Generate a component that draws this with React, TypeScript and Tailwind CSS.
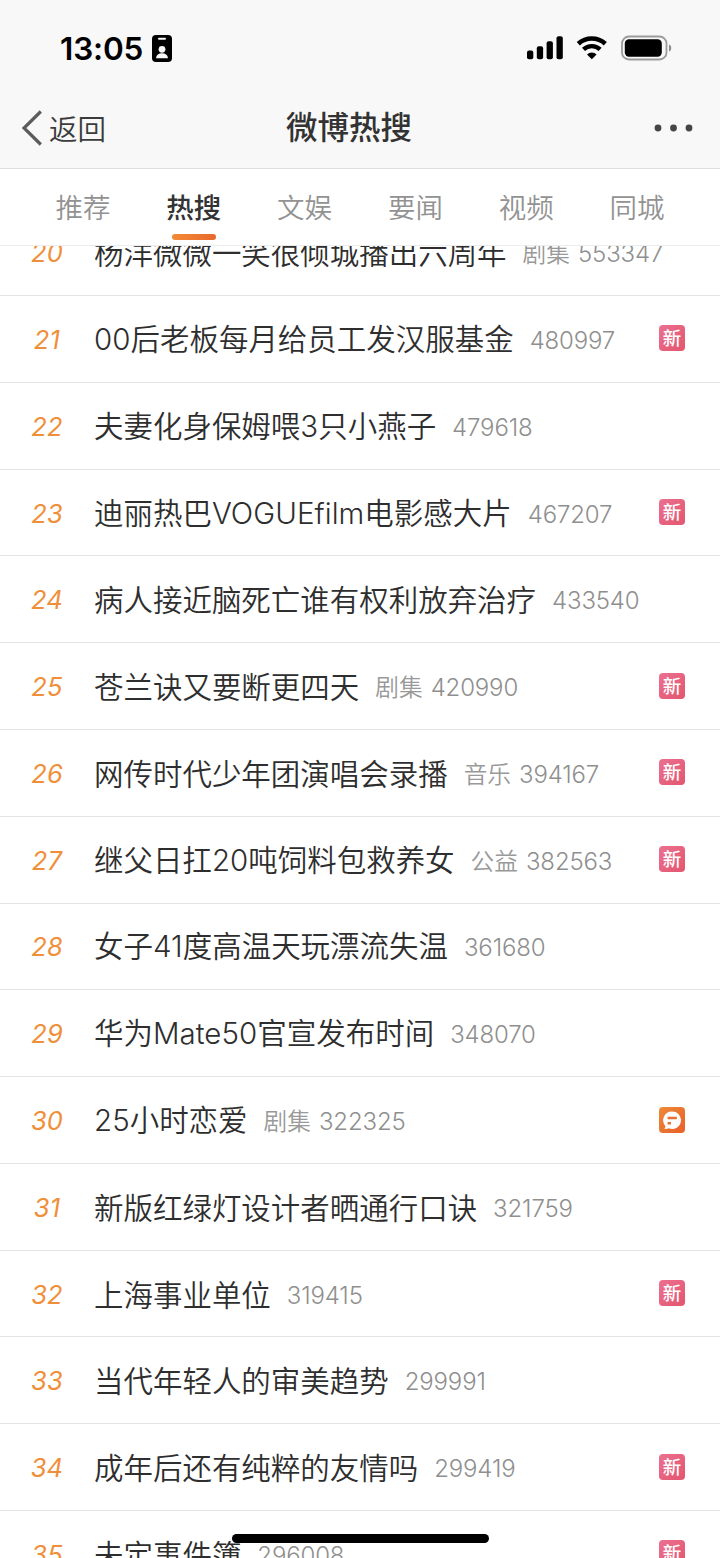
import React from "react";

type Badge = "new" | "discuss";

interface Topic {
  rank: number;
  title: string;
  category?: string;
  heat: string;
  badge?: Badge;
}

const topics: Topic[] = [
  { rank: 20, title: "杨洋微微一笑很倾城播出六周年", category: "剧集", heat: "553347" },
  { rank: 21, title: "00后老板每月给员工发汉服基金", heat: "480997", badge: "new" },
  { rank: 22, title: "夫妻化身保姆喂3只小燕子", heat: "479618" },
  { rank: 23, title: "迪丽热巴VOGUEfilm电影感大片", heat: "467207", badge: "new" },
  { rank: 24, title: "病人接近脑死亡谁有权利放弃治疗", heat: "433540" },
  { rank: 25, title: "苍兰诀又要断更四天", category: "剧集", heat: "420990", badge: "new" },
  { rank: 26, title: "网传时代少年团演唱会录播", category: "音乐", heat: "394167", badge: "new" },
  { rank: 27, title: "继父日扛20吨饲料包救养女", category: "公益", heat: "382563", badge: "new" },
  { rank: 28, title: "女子41度高温天玩漂流失温", heat: "361680" },
  { rank: 29, title: "华为Mate50官宣发布时间", heat: "348070" },
  { rank: 30, title: "25小时恋爱", category: "剧集", heat: "322325", badge: "discuss" },
  { rank: 31, title: "新版红绿灯设计者晒通行口诀", heat: "321759" },
  { rank: 32, title: "上海事业单位", heat: "319415", badge: "new" },
  { rank: 33, title: "当代年轻人的审美趋势", heat: "299991" },
  { rank: 34, title: "成年后还有纯粹的友情吗", heat: "299419", badge: "new" },
  { rank: 35, title: "未定事件簿", heat: "296008", badge: "new" },
];

const tabs = ["推荐", "热搜", "文娱", "要闻", "视频", "同城"];

function StatusBar() {
  return (
    <div className="flex h-[88px] items-start justify-between pl-[60px] pr-[48px] pt-[28px]">
      <div className="flex h-10 items-center gap-[9px]">
        <span className="mt-px font-['Inter'] text-[31.500px] font-semibold leading-10 tracking-[-0.150px] text-black">13:05</span>
        <svg className="h-[27px] w-5" viewBox="0 0 20 27">
          <rect width="20" height="27" rx="4" fill="#000" />
          <rect x="6" y="2.8" width="8" height="2" rx="1" fill="#f8f8f8" />
          <circle cx="10" cy="14.3" r="3.4" fill="#f8f8f8" />
          <path d="M4 23.2c.3-3.2 2.600-5 6-5s5.700 1.800 6 5z" fill="#f8f8f8" />
        </svg>
      </div>
      <div className="flex h-10 items-center">
        <svg className="h-6 w-[37px]" viewBox="0 0 37 24">
          <rect x="0" y="14.500" width="6.300" height="8.800" rx="2" />
          <rect x="9.800" y="10.300" width="6.300" height="13" rx="2" />
          <rect x="19.600" y="5.300" width="6.300" height="18" rx="2" />
          <rect x="29.500" y="0.300" width="6.300" height="23" rx="2" />
        </svg>
        <svg className="ml-[12px] h-6 w-8" viewBox="0 0 32 24">
          <path d="M2.300 7.800a20 20 0 0 1 27 0" fill="none" stroke="#000" strokeWidth="4.600" />
          <path d="M7.500 13.400a12.200 12.200 0 0 1 16.600 0" fill="none" stroke="#000" strokeWidth="4.400" />
          <path d="M11 18.400a7 7 0 0 1 9.600 0L15.800 23.300z" />
        </svg>
        <svg className="ml-[13px] h-[26px] w-[51px]" viewBox="0 0 51 26">
          <rect x="1" y="1.500" width="44.500" height="23" rx="7" fill="none" stroke="#9b9b9b" strokeWidth="1.800" />
          <rect x="3.800" y="4.300" width="37" height="17.400" rx="4.200" />
          <path d="M48 9.500c3 .8 3 6.200 0 7z" fill="#8d8d8d" />
        </svg>
      </div>
    </div>
  );
}

function NavBar() {
  return (
    <div className="grid h-[81px] grid-cols-[1fr_auto_1fr] items-center border-b border-[#dedede] pl-[22px] pr-[44px]">
      <button className="flex items-center gap-[7px] text-left">
        <svg className="h-9 w-5" viewBox="0 0 20 36">
          <path d="M18.800 1.500 2 18l16.800 16.500" fill="none" stroke="#5c5c5c" strokeWidth="3.200" />
        </svg>
        <span className="text-[28.500px] font-[350] leading-10 text-[#3c3c3c]">返回</span>
      </button>
      <h1 className="-mt-[6px] text-[31.500px] font-medium leading-10 text-[#333]">微博热搜</h1>
      <svg className="-mr-[17px] h-2 w-[39px] justify-self-end" viewBox="0 0 39 8" fill="#454545">
        <circle cx="4" cy="4" r="3.400" />
        <circle cx="19.500" cy="4" r="3.400" />
        <circle cx="35" cy="4" r="3.400" />
      </svg>
    </div>
  );
}

function Tabs() {
  return (
    <nav className="grid h-[77px] grid-cols-6 border-b border-[#ececec] bg-white px-[27.500px]">
      {tabs.map((tab) => {
        const active = tab === "热搜";
        return (
          <div key={tab} className="flex flex-col items-center pt-[17px]">
            <span
              className={
                active
                  ? "text-[27.500px] font-medium leading-10 text-[#333]"
                  : "text-[27.500px] font-[350] leading-10 text-[#929292]"
              }
            >
              {tab}
            </span>
            {active && (
              <span className="mt-[8px] h-[6px] w-11 rounded-full bg-linear-to-r from-[#f28a35] to-[#e9692c]" />
            )}
          </div>
        );
      })}
    </nav>
  );
}

function Title({ text }: { text: string }) {
  const runs = text.match(/[0-9A-Za-z]+|[^0-9A-Za-z]+/g) ?? [];
  return (
    <span className="-mt-[2px] text-[29.480px] font-[350] leading-10 text-[#2e2e2e]">
      {runs.map((run, i) =>
        /^[0-9A-Za-z]/.test(run) ? (
          <span key={i} className="font-['Inter'] font-[350] tracking-[0.05px]">
            {run}
          </span>
        ) : (
          <span key={i}>{run}</span>
        ),
      )}
    </span>
  );
}

function NewBadge() {
  return (
    <span className="flex size-[26px] items-center justify-center rounded-[4px] bg-linear-to-br from-[#eb7090] to-[#e3556f] text-[18.500px] font-medium leading-[24px] text-white">
      <span className="-mt-[2px]">新</span>
    </span>
  );
}

function DiscussBadge() {
  return (
    <svg className="size-[26px]" viewBox="0 0 26 26">
      <defs>
        <linearGradient id="discuss" x1="0" y1="0" x2="1" y2="1">
          <stop offset="0" stopColor="#ee8a36" />
          <stop offset="1" stopColor="#e8602a" />
        </linearGradient>
      </defs>
      <rect width="26" height="26" rx="4" fill="url(#discuss)" />
      <path d="M13.200 4.500a8.700 8.700 0 1 1-3.400 16.700c-1.500.7-3 .9-4.600.6.900-.9 1.300-1.700 1.200-2.800A8.700 8.700 0 0 1 13.200 4.500z" fill="#fff" />
      <path d="M8.600 11h9.200M8.600 16.200h3.400" stroke="#e9702d" strokeWidth="2.400" />
    </svg>
  );
}

function Row({ topic }: { topic: Topic }) {
  return (
    <li className="flex h-[86.786px] shrink-0 items-center border-b border-[#e4e4e4] pl-[27px] pr-[35px]">
      <span className="mr-[27px] mt-[2px] w-10 shrink-0 text-center font-['Inter'] text-[25.500px] font-normal italic leading-10 tracking-[0.2px] text-[#f08f3a]">
        {topic.rank}
      </span>
      <Title text={topic.title} />
      <span className="ml-4 flex gap-2 text-[23.700px] font-[350] leading-10 text-[#999]">
        {topic.category && <span className="mt-[2px]">{topic.category}</span>}
        <span className="mt-[4px] font-['Inter'] text-[24px] font-light leading-10 tracking-[-0.150px] text-[#8f8f8f]">{topic.heat}</span>
      </span>
      {topic.badge && (
        <span className="-mt-px ml-auto">{topic.badge === "new" ? <NewBadge /> : <DiscussBadge />}</span>
      )}
    </li>
  );
}

export default function App() {
  return (
    <div className="relative flex h-[1558px] w-[720px] flex-col overflow-hidden whitespace-nowrap bg-white font-['Noto_Sans_CJK_SC',sans-serif]">
      <header className="z-10 shrink-0 bg-[#f8f8f8]">
        <StatusBar />
        <NavBar />
        <Tabs />
      </header>
      <main className="flex min-h-0 flex-1 flex-col overflow-hidden">
        <ul className="-mt-[36.700px] flex flex-col">
          {topics.map((topic) => (
            <Row key={topic.rank} topic={topic} />
          ))}
        </ul>
      </main>
      <div className="absolute bottom-[15px] left-[232px] h-[9px] w-[257px] rounded-full bg-black" />
    </div>
  );
}
